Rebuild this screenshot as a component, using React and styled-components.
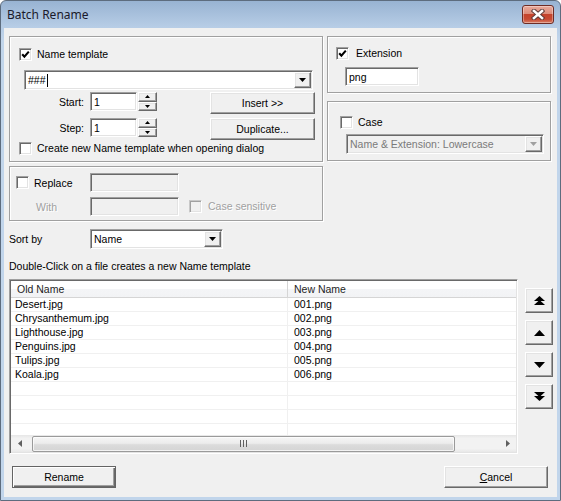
import styled, { createGlobalStyle, css } from "styled-components";

const GlobalStyle = createGlobalStyle`
  html, body { margin: 0; padding: 0; background: #fff; }
  body {
    font-family: "Liberation Sans", Arial, sans-serif;
    font-size: 10.5px;
    color: #000;
  }
  * { box-sizing: border-box; }
`;

const raised = css`
  background: #f0f0f0;
  border: 1px solid;
  border-color: #fff #696969 #696969 #fff;
  box-shadow: inset -1px -1px 0 #a0a0a0, inset 1px 1px 0 #e3e3e3;
`;

const sunken = css`
  border: 1px solid;
  border-color: #a0a0a0 #fff #fff #a0a0a0;
  box-shadow: inset 1px 1px 0 #696969, inset -1px -1px 0 #e3e3e3;
`;

const Window = styled.div`
  width: 561px;
  height: 501px;
  display: flex;
  flex-direction: column;
  border: 1px solid #5d6c7e;
  border-radius: 6px 6px 0 0;
  overflow: hidden;
  background: linear-gradient(to bottom, #98b3d2 0px, #b7cde6 26px, #c1d5eb 40px, #c1d5eb 100%);
`;

const TitleBar = styled.div`
  height: 27px;
  flex-shrink: 0;
  display: flex;
  align-items: center;
  justify-content: space-between;
  padding: 0 6px 0 6px;
`;

const Title = styled.span`
  font-family: "Noto Sans", "Liberation Sans", sans-serif;
  font-size: 12px;
  color: #1a1a2a;
`;

const CloseButton = styled.div`
  width: 32px;
  height: 19px;
  border: 1px solid #6e2c25;
  border-radius: 3px;
  display: flex;
  align-items: center;
  justify-content: center;
  background: linear-gradient(
    to bottom,
    #e9aa9c 0%,
    #dc8c7a 45%,
    #c4432c 50%,
    #c74a33 78%,
    #d97e64 100%
  );
  box-shadow: inset 0 0 0 1px rgba(255, 255, 255, 0.35);
`;

const Client = styled.div`
  flex: 1;
  margin: 0 3px 3px 3px;
  background: #f0f0f0;
  padding: 8px 4px 0 5px;
  display: flex;
  flex-direction: column;
`;

const TopRow = styled.div`
  display: flex;
  gap: 4px;
`;

const Column = styled.div`
  width: ${(p) => p.$w}px;
  display: flex;
  flex-direction: column;
  gap: ${(p) => p.$gap}px;
`;

const Group = styled.div`
  height: ${(p) => p.$h}px;
  border: 1px solid #a0a0a0;
  box-shadow: inset 1px 1px 0 #fff, 1px 1px 0 #fff;
  padding: ${(p) => p.$pad};
  display: flex;
  flex-direction: column;
  align-items: flex-start;
`;

const CheckRow = styled.label`
  display: flex;
  align-items: center;
  gap: ${(p) => p.$gap || 5}px;
  height: 13px;
  line-height: 13px;
  margin: ${(p) => p.$m || 0};
  color: ${(p) => (p.$disabled ? "#a0a0a0" : "#000")};
  text-shadow: ${(p) => (p.$disabled ? "1px 1px 0 #fff" : "none")};
  white-space: nowrap;
`;

const Box = styled.span`
  width: 13px;
  height: 13px;
  flex-shrink: 0;
  display: flex;
  align-items: center;
  justify-content: center;
  background: ${(p) => (p.$disabled ? "#f0f0f0" : "#fff")};
  ${sunken}
  ${(p) =>
    p.$disabled &&
    css`
      border-color: #c8c8c8 #fff #fff #c8c8c8;
      box-shadow: inset 1px 1px 0 #a0a0a0, inset -1px -1px 0 #e3e3e3;
    `}
`;

const Field = styled.div`
  width: ${(p) => p.$w}px;
  height: ${(p) => p.$h || 19}px;
  flex-shrink: 0;
  margin: ${(p) => p.$m || 0};
  background: ${(p) => (p.$disabled ? "#f0f0f0" : "#fff")};
  ${sunken}
  display: flex;
  align-items: center;
  padding: 0 2px 0 3px;
  color: ${(p) => (p.$disabled ? "#7a7a7a" : "#000")};
  white-space: nowrap;
  overflow: hidden;
`;

const FieldText = styled.span`
  flex: 1;
  display: flex;
  align-items: center;
`;

const Caret = styled.span`
  width: 1px;
  height: 13px;
  background: #000;
  margin-left: 1px;
`;

const DropButton = styled.span`
  width: 17px;
  height: 16px;
  flex-shrink: 0;
  display: flex;
  align-items: center;
  justify-content: center;
  ${raised}
`;

const SpinWrap = styled.div`
  width: 19px;
  height: 19px;
  margin-left: 1px;
  display: flex;
  flex-direction: column;
`;

const SpinHalf = styled.span`
  flex: 1;
  display: flex;
  align-items: center;
  justify-content: center;
  ${raised}
`;

const Body = styled.div`
  display: flex;
  margin-top: 2px;
`;

const SpinCol = styled.div`
  display: flex;
  flex-direction: column;
  gap: 7px;
`;

const SpinRow = styled.div`
  display: flex;
  align-items: center;
  height: 19px;
`;

const FieldLabel = styled.span`
  width: ${(p) => p.$w}px;
  flex-shrink: 0;
  padding-left: ${(p) => p.$pl || 0}px;
  color: ${(p) => (p.$disabled ? "#a0a0a0" : "#000")};
  text-shadow: ${(p) => (p.$disabled ? "1px 1px 0 #fff" : "none")};
  display: flex;
  align-items: center;
  justify-content: ${(p) => (p.$align === "right" ? "flex-end" : "flex-start")};
  gap: 5px;
`;

const ButtonCol = styled.div`
  display: flex;
  flex-direction: column;
  gap: 4px;
  margin-left: 53px;
`;

const Button = styled.button`
  width: ${(p) => p.$w}px;
  height: ${(p) => p.$h || 22}px;
  font: inherit;
  color: #000;
  padding: 0;
  display: flex;
  align-items: center;
  justify-content: center;
  ${raised}
  ${(p) =>
    p.$default &&
    css`
      border: 1px solid #646464;
      box-shadow: inset 1px 1px 0 #fff, inset -1px -1px 0 #696969,
        inset -2px -2px 0 #a0a0a0;
    `}
`;

const Row = styled.div`
  display: flex;
  align-items: center;
  margin-top: ${(p) => p.$mt || 0}px;
`;

const Hint = styled.div`
  margin-top: 11px;
  height: 13px;
  line-height: 13px;
`;

const ListRow = styled.div`
  display: flex;
  margin-top: 6px;
`;

const ListView = styled.div`
  width: 509px;
  height: 175px;
  background: #fff;
  border: 1px solid;
  border-color: #a0a0a0 #fff #fff #a0a0a0;
  box-shadow: inset 1px 1px 0 #696969, inset -1px -1px 0 #e3e3e3;
  padding: 1px;
  display: flex;
  flex-direction: column;
`;

const Header = styled.div`
  height: 17px;
  flex-shrink: 0;
  display: flex;
  background: linear-gradient(to bottom, #ffffff 0%, #ffffff 50%, #f4f5f7 51%, #f2f3f5 100%);
  border-bottom: 1px solid #d5d5d5;
  overflow: hidden;
`;

const HeadCell = styled.div`
  width: ${(p) => p.$w}px;
  flex-shrink: 0;
  padding-left: 6px;
  line-height: 16px;
  border-right: 1px solid #d5d5d5;
  color: #1e1e1e;
`;

const Rows = styled.div`
  flex: 1;
  overflow: hidden;
`;

const ListItem = styled.div`
  height: 14px;
  display: flex;
  border-bottom: 1px solid #f0f0f0;
`;

const Cell = styled.div`
  width: ${(p) => p.$w}px;
  flex-shrink: 0;
  padding-left: ${(p) => p.$pl}px;
  line-height: 13px;
  border-right: 1px solid #f0f0f0;
  white-space: nowrap;
`;

const HScroll = styled.div`
  height: 17px;
  flex-shrink: 0;
  display: flex;
  align-items: center;
  background: linear-gradient(to bottom, #e6e6e6 0%, #f2f2f2 20%, #f2f2f2 80%, #e8e8e8 100%);
`;

const ScrollArrow = styled.span`
  width: 17px;
  height: 17px;
  flex-shrink: 0;
  display: flex;
  align-items: center;
  justify-content: center;
`;

const Thumb = styled.span`
  width: 423px;
  height: 16px;
  margin-left: 4px;
  border: 1px solid #9a9a9a;
  border-radius: 2px;
  background: linear-gradient(to bottom, #f6f6f6 0%, #ececec 45%, #dcdcdc 55%, #d4d4d4 100%);
  box-shadow: inset 0 0 0 1px rgba(255, 255, 255, 0.7);
  display: flex;
  align-items: center;
  justify-content: center;
`;

const Track = styled.span`
  flex: 1;
`;

const SideButtons = styled.div`
  margin-left: 7px;
  padding-top: 9px;
  display: flex;
  flex-direction: column;
  gap: 7px;
`;

const BottomRow = styled.div`
  display: flex;
  justify-content: space-between;
  margin-top: 12px;
  padding: 0 5px 0 3px;
`;

const Check = () => (
  <svg width="9" height="9" viewBox="0 0 9 9">
    <polyline points="1.2,4.2 3.4,6.6 7.8,1.6" fill="none" stroke="#000" strokeWidth="2.1" />
  </svg>
);

const Tri = ({ dir = "down", w = 7, h = 4, color = "#000" }) => {
  const pts = {
    down: `0,0 ${w},0 ${w / 2},${h}`,
    up: `0,${h} ${w},${h} ${w / 2},0`,
    left: `${w},0 ${w},${h} 0,${h / 2}`,
    right: `0,0 0,${h} ${w},${h / 2}`,
  }[dir];
  return (
    <svg width={w} height={h} viewBox={`0 0 ${w} ${h}`}>
      <polygon points={pts} fill={color} />
    </svg>
  );
};

const DoubleTri = ({ dir }) => (
  <svg width="11" height="9" viewBox="0 0 11 9">
    {dir === "up" ? (
      <>
        <polygon points="0,5 5.5,0 11,5" fill="#000" />
        <polygon points="0,9 5.5,4 11,9" fill="#000" />
      </>
    ) : (
      <>
        <polygon points="0,0 5.5,5 11,0" fill="#000" />
        <polygon points="0,4 5.5,9 11,4" fill="#000" />
      </>
    )}
  </svg>
);

const CloseX = () => (
  <svg width="14" height="11" viewBox="0 0 14 11">
    <g strokeLinecap="square">
      <line x1="3" y1="2" x2="11" y2="9" stroke="#5a3a38" strokeWidth="4.4" />
      <line x1="11" y1="2" x2="3" y2="9" stroke="#5a3a38" strokeWidth="4.4" />
      <line x1="3" y1="2" x2="11" y2="9" stroke="#fff" strokeWidth="2.6" />
      <line x1="11" y1="2" x2="3" y2="9" stroke="#fff" strokeWidth="2.6" />
    </g>
  </svg>
);

const Grip = () => (
  <svg width="7" height="7" viewBox="0 0 7 7">
    <rect x="0" y="0" width="1" height="7" fill="#5f5f5f" />
    <rect x="3" y="0" width="1" height="7" fill="#5f5f5f" />
    <rect x="6" y="0" width="1" height="7" fill="#5f5f5f" />
  </svg>
);

const Spinner = () => (
  <SpinWrap>
    <SpinHalf>
      <Tri dir="up" w={5} h={3} />
    </SpinHalf>
    <SpinHalf>
      <Tri dir="down" w={5} h={3} />
    </SpinHalf>
  </SpinWrap>
);

const Combo = ({ w, m, disabled, children }) => (
  <Field $w={w} $h={20} $m={m} $disabled={disabled} style={{ paddingRight: 1 }}>
    <FieldText>{children}</FieldText>
    <DropButton>
      <Tri dir="down" w={7} h={4} color={disabled ? "#a0a0a0" : "#000"} />
    </DropButton>
  </Field>
);

const oldNames = [
  "Desert.jpg",
  "Chrysanthemum.jpg",
  "Lighthouse.jpg",
  "Penguins.jpg",
  "Tulips.jpg",
  "Koala.jpg",
];

const rows = Array.from({ length: 10 }, (_, i) => ({
  old: oldNames[i] || "",
  renamed: oldNames[i] ? `00${i + 1}.png` : "",
}));

const App = () => {
  return (
    <>
      <GlobalStyle />
      <Window>
        <TitleBar>
          <Title>Batch Rename</Title>
          <CloseButton>
            <CloseX />
          </CloseButton>
        </TitleBar>
        <Client>
          <TopRow>
            <Column $w={314} $gap={4}>
              <Group $h={126} $pad="11px 0 0 9px">
                <CheckRow>
                  <Box>
                    <Check />
                  </Box>
                  Name template
                </CheckRow>
                <Combo w={289} m="9px 0 0 5px">
                  ###
                  <Caret />
                </Combo>
                <Body>
                  <SpinCol>
                    <SpinRow>
                      <FieldLabel $w={65} $align="right">Start:</FieldLabel>
                      <Field $w={47} $m="0 0 0 6px">1</Field>
                      <Spinner />
                    </SpinRow>
                    <SpinRow>
                      <FieldLabel $w={65} $align="right">Step:</FieldLabel>
                      <Field $w={47} $m="0 0 0 6px">1</Field>
                      <Spinner />
                    </SpinRow>
                  </SpinCol>
                  <ButtonCol>
                    <Button $w={105}>Insert &gt;&gt;</Button>
                    <Button $w={105}>Duplicate...</Button>
                  </ButtonCol>
                </Body>
                <CheckRow $m="2px 0 0 0">
                  <Box />
                  Create new Name template when opening dialog
                </CheckRow>
              </Group>
              <Group $h={55} $pad="6px 0 0 6px">
                <Row>
                  <FieldLabel $w={74}>
                    <Box />
                    Replace
                  </FieldLabel>
                  <Field $w={89} $disabled />
                </Row>
                <Row $mt={5}>
                  <FieldLabel $w={74} $pl={20} $disabled>
                    With
                  </FieldLabel>
                  <Field $w={89} $disabled />
                  <CheckRow $gap={6} $m="0 0 0 10px" $disabled>
                    <Box $disabled />
                    Case sensitive
                  </CheckRow>
                </Row>
              </Group>
            </Column>
            <Column $w={224} $gap={8}>
              <Group $h={57} $pad="10px 0 0 8px">
                <CheckRow $gap={7}>
                  <Box>
                    <Check />
                  </Box>
                  Extension
                </CheckRow>
                <Field $w={74} $m="7px 0 0 9px">png</Field>
              </Group>
              <Group $h={60} $pad="14px 0 0 12px">
                <CheckRow>
                  <Box />
                  Case
                </CheckRow>
                <Combo w={198} m="5px 0 0 6px" disabled>
                  Name &amp; Extension: Lowercase
                </Combo>
              </Group>
            </Column>
          </TopRow>

          <Row $mt={8}>
            <FieldLabel $w={81}>Sort by</FieldLabel>
            <Combo w={133}>Name</Combo>
          </Row>

          <Hint>Double-Click on a file creates a new Name template</Hint>

          <ListRow>
            <ListView>
              <Header>
                <HeadCell $w={277}>Old Name</HeadCell>
                <HeadCell $w={229}>New Name</HeadCell>
              </Header>
              <Rows>
                {rows.map((r, i) => (
                  <ListItem key={i}>
                    <Cell $w={277} $pl={4}>{r.old}</Cell>
                    <Cell $w={229} $pl={6}>{r.renamed}</Cell>
                  </ListItem>
                ))}
              </Rows>
              <HScroll>
                <ScrollArrow>
                  <Tri dir="left" w={4} h={7} color="#606060" />
                </ScrollArrow>
                <Thumb>
                  <Grip />
                </Thumb>
                <Track />
                <ScrollArrow>
                  <Tri dir="right" w={4} h={7} color="#606060" />
                </ScrollArrow>
              </HScroll>
            </ListView>
            <SideButtons>
              <Button $w={28} $h={25}>
                <DoubleTri dir="up" />
              </Button>
              <Button $w={28} $h={25}>
                <Tri dir="up" w={11} h={6} />
              </Button>
              <Button $w={28} $h={25}>
                <Tri dir="down" w={11} h={6} />
              </Button>
              <Button $w={28} $h={25}>
                <DoubleTri dir="down" />
              </Button>
            </SideButtons>
          </ListRow>

          <BottomRow>
            <Button $w={104} $default>
              Rename
            </Button>
            <Button $w={104}>
              <span>
                <u>C</u>ancel
              </span>
            </Button>
          </BottomRow>
        </Client>
      </Window>
    </>
  );
};

export default App;
